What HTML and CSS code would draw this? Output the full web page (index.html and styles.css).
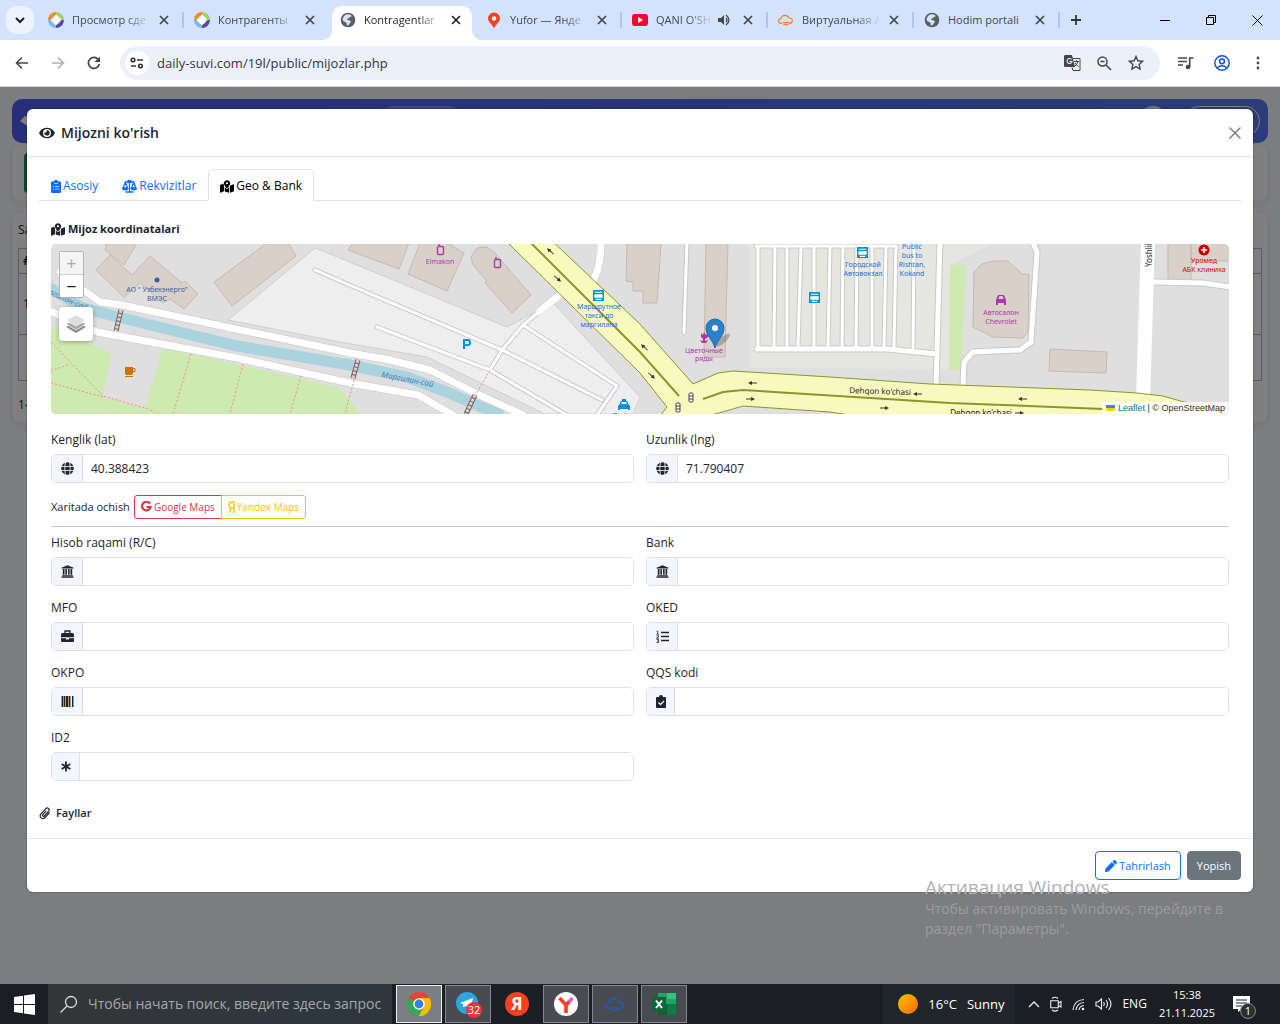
FILE: index.html
```
<!DOCTYPE html>
<html lang="uz">
<head>
    <meta charset="UTF-8">
    <meta name="viewport" content="width=device-width, initial-scale=1.0">
    <title>Kontragentlar</title>
    <link rel="stylesheet" href="styles.css">
</head>
<body>
    <svg class="defs" aria-hidden="true">
        <symbol id="x" viewBox="0 0 10 10"><path d="M1 1l8 8M9 1l-8 8" fill="none" stroke="currentColor" stroke-width="1.7"/></symbol>
        <symbol id="world" viewBox="0 0 16 16"><circle cx="8" cy="8" r="7.3" fill="#5a5d61"/><path d="M8 2.300c2 0 3 .8 4 2-1 .6-2.500.4-2.700 1.500-.2.900-2 .5-2.300 1.500-.2 1 2.500.6 3.500 1.600.9 1-.5 2-1 2.800-.6.900-1.300 2-2.300 1.800-1-.3-.3-1.800-.8-2.600-.8-1-2.500-1-3.700-2.400C2.300 5 5 2.300 8 2.300z" fill="#d3e3fd"/></symbol>
        <symbol id="ring" viewBox="0 0 16 16"><g fill="none" stroke-width="4"><path d="M2 8A6 6 0 0 1 8 2" stroke="#f08a28"/><path d="M8 2a6 6 0 0 1 6 6" stroke="#a9cf62"/><path d="M14 8a6 6 0 0 1-6 6" stroke="#5a45a8"/><path d="M8 14a6 6 0 0 1-6-6" stroke="#79b9e8"/></g><path d="M8 2.500L13.500 8 8 13.500 2.500 8z" fill="#fff"/></symbol>
        <symbol id="cloud" viewBox="0 0 24 18"><path d="M6 14H4.500a3.500 3.500 0 0 1 0-7c.5-3 3-5 6-5s5 1.500 6 4c3 0 5 1.500 5 4 0 2.300-1.500 4-4 4H17M7 13h10M8 16h8" fill="none" stroke="currentColor" stroke-width="1.700"/></symbol>
        <symbol id="mapicon" viewBox="0 0 576 512"><path d="M0 190l144-58c0 30 7 52 20 78v240L20 510c-10 4-20-4-20-14zM288 0c72 0 128 56 128 126 0 60-60 140-108 196-11 13-29 13-40 0-48-56-108-136-108-196C160 56 216 0 288 0zm0 168a44 44 0 1 0 0-88 44 44 0 1 0 0 88zM196 270c15 26 33 48 51 70 22 26 60 26 82 0 18-22 36-44 51-70v176l-12 64-172-52zM412 220l144-60c10-4 20 4 20 14v276l-164 60z" fill="currentColor"/></symbol>
        <symbol id="globe" viewBox="0 0 512 512"><circle cx="256" cy="256" r="248" fill="currentColor"/><path d="M0 175h512M0 337h512M178 0c-35 150-35 362 0 512M334 0c35 150 35 362 0 512" fill="none" stroke="#f3f6ff" stroke-width="34"/></symbol>
        <symbol id="bank" viewBox="0 0 512 512"><path d="M256 10L18 105v35h476v-35zM70 160h68v225H70zm102 0h62v225h-62zm106 0h62v225h-62zm96 0h68v225h-68zM48 400h416v40H48zM16 450h480v50H16z" fill="currentColor"/></symbol>
        <symbol id="bus" viewBox="0 0 12 12"><path d="M0 0h12v12H0z" fill="#0092da"/><path d="M2 2h8v1H2zM1.500 4.500h9v4h-9zM3 9.500h6v1.500H3z" fill="#fff"/></symbol>
        <symbol id="arrow" viewBox="0 0 10 6"><path d="M3 3h6" stroke="#333" stroke-width="1"/><path d="M0 3l4-2v4z" fill="#333"/></symbol>
    </svg>

    <div class="tabstrip">
        <button class="tab-search" aria-label="Search tabs"><svg width="10" height="7" viewBox="0 0 10 7"><path d="M1 1l4 4 4-4" fill="none" stroke="#1f1f1f" stroke-width="2"/></svg></button>
        <div class="tab"><svg class="fav"><use href="#ring"/></svg><span>Просмотр сде</span><button aria-label="Close"><svg><use href="#x"/></svg></button></div>
        <div class="tab no-line"><svg class="fav"><use href="#ring"/></svg><span>Контрагенты</span><button aria-label="Close"><svg><use href="#x"/></svg></button></div>
        <div class="tab current"><svg class="fav"><use href="#world"/></svg><span>Kontragentlar</span><button aria-label="Close"><svg><use href="#x"/></svg></button></div>
        <div class="tab"><svg class="fav" viewBox="0 0 16 16"><path d="M8 .5a6 6 0 0 1 6 6c0 4-4 5-5.300 9H7.300C6 11.500 2 10.500 2 6.500a6 6 0 0 1 6-6z" fill="#fc3f1d"/><circle cx="8" cy="6.500" r="2.200" fill="#fff"/></svg><span>Yufor — Янде</span><button aria-label="Close"><svg><use href="#x"/></svg></button></div>
        <div class="tab"><svg class="fav" viewBox="0 0 16 16"><rect y="2" width="16" height="12" rx="3" fill="#f03"/><path d="M6 5l5 3-5 3z" fill="#fff"/></svg><span>QANI O'SH</span><svg class="sound" viewBox="0 0 12 12"><path d="M0 4h3l3-3v10L3 8H0z" fill="#474747"/><path d="M8 4q2 2 0 4M8 1q6 5 0 10" fill="none" stroke="#474747" stroke-width="1.300"/></svg><button aria-label="Close"><svg><use href="#x"/></svg></button></div>
        <div class="tab"><svg class="fav orange"><use href="#cloud"/></svg><span>Виртуальная А</span><button aria-label="Close"><svg><use href="#x"/></svg></button></div>
        <div class="tab fits"><svg class="fav"><use href="#world"/></svg><span>Hodim portali</span><button aria-label="Close"><svg><use href="#x"/></svg></button></div>
        <button class="new-tab" aria-label="New tab"><svg width="12" height="12" viewBox="0 0 12 12"><path d="M6 1v10M1 6h10" stroke="#333" stroke-width="1.800"/></svg></button>
        <div class="window-buttons">
            <button aria-label="Minimize"><svg width="11" height="11" viewBox="0 0 11 11"><path d="M0 5.500h10" stroke="#000"/></svg></button>
            <button aria-label="Restore"><svg width="11" height="11" viewBox="0 0 11 11"><path d="M.5 2.500h7v7h-7zM2.500 2.500v-2h7v7h-2" fill="none" stroke="#000"/></svg></button>
            <button aria-label="Close window"><svg width="11" height="11" viewBox="0 0 11 11"><path d="M.5.5l10 10M10.500.5l-10 10" stroke="#000"/></svg></button>
        </div>
    </div>

    <div class="toolbar">
        <button aria-label="Back"><svg width="14" height="14" viewBox="0 0 14 14"><path d="M13 7H2M7 1.500L1.500 7 7 12.500" fill="none" stroke="#474747" stroke-width="1.600"/></svg></button>
        <button aria-label="Forward"><svg width="14" height="14" viewBox="0 0 14 14"><path d="M1 7h11M7 1.500L12.500 7 7 12.500" fill="none" stroke="#b0b0b0" stroke-width="1.600"/></svg></button>
        <button aria-label="Reload"><svg width="14" height="14" viewBox="0 0 14 14"><path d="M12.300 8A5.500 5.500 0 1 1 11 3.200L12.500 5" fill="none" stroke="#474747" stroke-width="1.700"/><path d="M13 .5V6H7.500z" fill="#474747"/></svg></button>
        <div class="address">
            <button class="site-info" aria-label="Site information"><svg width="14" height="12" viewBox="0 0 14 12"><g fill="none" stroke="#333" stroke-width="1.600"><circle cx="3" cy="3" r="1.800"/><path d="M7 3h6M1 9h5"/><circle cx="10.500" cy="9" r="1.800"/></g></svg></button>
            <input type="text" aria-label="Address" value="daily-suvi.com/19l/public/mijozlar.php">
            <button aria-label="Translate"><svg width="17" height="16" viewBox="0 0 17 16"><path d="M1 0h7l3 12H1a1 1 0 0 1-1-1V1z" fill="#474747"/><path d="M7.500 4.500A2.500 2.500 0 1 0 8 6.500H5.500" fill="none" stroke="#ecf0fa" stroke-width="1.100"/><path d="M9 3.500h7v12H9l-1-3M10 6.500h5M12.500 5v1.500M14 6.500q-1 3-3.500 5M11 8q1 2 3.500 3.500" fill="none" stroke="#474747"/></svg></button>
            <button aria-label="Zoom"><svg width="15" height="15" viewBox="0 0 15 15"><path d="M9 9l5 5M3.500 5.500h4" stroke="#474747" stroke-width="1.600"/><circle cx="5.500" cy="5.500" r="4.500" fill="none" stroke="#474747" stroke-width="1.500"/></svg></button>
            <button aria-label="Bookmark"><svg width="16" height="16" viewBox="0 0 16 16"><path d="M8 1.500l1.900 4.300 4.700.5-3.500 3.100 1 4.600L8 11.600 3.900 14l1-4.600L1.400 6.300l4.700-.5z" fill="none" stroke="#474747" stroke-width="1.400"/></svg></button>
        </div>
        <button aria-label="Media"><svg width="16" height="14" viewBox="0 0 16 14"><path d="M0 2h9M0 5.500h9M0 9h5" stroke="#474747" stroke-width="1.500"/><path d="M11.700 11V2H15.500" fill="none" stroke="#474747" stroke-width="1.700"/><circle cx="10" cy="11" r="2.300" fill="#474747"/></svg></button>
        <button aria-label="Profile"><svg width="16" height="16" viewBox="0 0 16 16"><g fill="none" stroke="#0b57d0" stroke-width="1.500"><circle cx="8" cy="8" r="7.200"/><circle cx="8" cy="6.300" r="2.400"/><path d="M3 13q5-4.500 10 0"/></g></svg></button>
        <button aria-label="Menu"><svg width="4" height="14" viewBox="0 0 4 14"><g fill="#474747"><circle cx="2" cy="2" r="1.400"/><circle cx="2" cy="7" r="1.400"/><circle cx="2" cy="12" r="1.400"/></g></svg></button>
    </div>

    <main class="viewport">
        <div class="page">
            <div class="navbar"><svg width="14" height="14" viewBox="0 0 14 14"><path d="M0 7l5-5h5l4 5-5 6z" fill="#fff"/></svg><i class="pill"></i><i class="avatar"></i><i class="logout"></i></div>
            <div class="card toolbar-card"><i class="add"></i></div>
            <div class="card list-card">
                <div>Sahifada</div>
                <table>
                    <tr><th>#</th><th></th></tr>
                    <tr><td>1</td><td></td></tr>
                    <tr><td></td><td></td></tr>
                </table>
                <div>1-1 / 1</div>
            </div>
        </div>
        <div class="backdrop"></div>

        <section class="modal" role="dialog" aria-labelledby="modalTitle">
            <header class="modal-header">
                <svg width="16" height="14" viewBox="0 0 576 512"><path fill="currentColor" d="M572.520 241.400C518.290 135.590 410.930 64 288 64S57.680 135.640 3.480 241.410a32.350 32.350 0 0 0 0 29.190C57.710 376.410 165.070 448 288 448s230.320-71.640 284.520-177.410a32.350 32.350 0 0 0 0-29.190zM288 400a144 144 0 1 1 144-144 143.930 143.930 0 0 1-144 144zm0-240a95.310 95.310 0 0 0-25.310 3.790 47.850 47.850 0 0 1-66.900 66.900A95.780 95.780 0 1 0 288 160z"/></svg>
                <h1 id="modalTitle">Mijozni ko'rish</h1>
                <button class="btn-close" aria-label="Close"><svg width="12" height="12" viewBox="0 0 12 12"><path d="M.5.5l11 11M11.500.5l-11 11" stroke="#7f7f7f" stroke-width="1.500"/></svg></button>
            </header>

            <div class="modal-body">
                <nav class="nav-tabs">
                    <a href="#asosiy"><svg width="10" height="13" viewBox="0 0 10 13"><path d="M1 1.500h2a2 2 0 0 1 4 0h2a1 1 0 0 1 1 1V12a1 1 0 0 1-1 1H1a1 1 0 0 1-1-1V2.500a1 1 0 0 1 1-1z" fill="currentColor"/><path d="M3 3.500h4M2 6.500h1M4 6.500h4M2 9h1M4 9h4" stroke="#fff" stroke-width=".7"/></svg>Asosiy</a>
                    <a href="#rekvizit"><svg width="15" height="13" viewBox="0 0 15 13"><path d="M7.500 0v12M2.500 2h10M3.500 12h8M3.300 2.500L1 8h4.600zM11.700 2.500L9.400 8H14z" fill="none" stroke="currentColor" stroke-width="1.300"/><path d="M0 8h6.400a3.200 2.500 0 0 1-6.400 0zM8.600 8H15a3.200 2.500 0 0 1-6.400 0zM5.500 0h4v3h-4z" fill="currentColor"/></svg>Rekvizitlar</a>
                    <a href="#geo" class="active"><svg width="14" height="13"><use href="#mapicon"/></svg>Geo &amp; Bank</a>
                </nav>

                <div class="tab-pane">
                    <h2><svg width="14" height="13"><use href="#mapicon"/></svg>Mijoz koordinatalari</h2>
                    <div class="map">
                        <svg class="tiles" viewBox="51 244 1178 170" preserveAspectRatio="xMidYMid slice">
                            <path class="land" d="M51 244h1178v170H51z"/>
                            <path class="green" d="M51 326l60 27-8 44 42 11 18-60 175 39 12 13 10 14H51z"/>
                            <path class="lot" d="M228 320l87-72 25 10 167 69 46-24 87 94-7 17h-88l-118-57-87-15z"/>
                            <path class="station" d="M750 244v124l199 1 1-104 42-21z"/>
                            <g class="building">
                                <path d="M107 243h30l-13 22-19-15zM96 270l14-15 22 20 18-19 32 27 3-2 13 13-14 15-14-10-7 4-23-20-16 14zM214 282l53-39h21l8 13-64 50zM353 243l-5 7 51 19 10-26zM420 243l-12 31 39 17 17-38-17-10zM471 257l6-9 10-1 8 6 36 42-19 18-27-30 2-2-14-16z"/>
                                <path d="M627 243l-1 38 7 1v9h10v12h14l4-60zM706 243h22l-3 114h-21zM974 272l8-8 11-3h15l14 13h7l-1 58-5 6-30-1-20-10zM1050 349l57 3-1 21-57-2zM1168 243h23v38l-23-2zM1191 243h39v18h-39z"/>
                            </g>
                            <path class="green" d="M950 265h16l-5 105h-12z"/>
                            <path class="water" d="M45 285l38 23 39 10 115 28 113 19 57 12 40 15 55 24"/>
                            <g class="road-edge">
                                <path class="w10" d="M60 272l23 18 17 12 22 3 228 48 40 7 40 10 43 22 50 23M48 310l49 22 140 26 113 25 68 12 35 20M562 293l-22 18M601 240q1 25-10 45M1148 240l-5 160"/>
                                <path class="w6" d="M540 311l-17 14-21 25-12 20M315 270l25 11 162 69 100 50M377 327l113 43 75 44M523 325l94 61-20 29M687 240l-3 93"/>
                            </g>
                            <g class="road">
                                <path class="w8" d="M60 272l23 18 17 12 22 3 228 48 40 7 40 10 43 22 50 23M48 310l49 22 140 26 113 25 68 12 35 20M562 293l-22 18M601 240q1 25-10 45"/>
                                <path class="w4" d="M540 311l-17 14-21 25-12 20M315 270l25 11 162 69 100 50M377 327l113 43 75 44M523 325l94 61-20 29M687 240l-3 93"/>
                            </g>
                            <g class="road-edge"><path class="w6" d="M758 246v103M775 246l-1 102M787 246v102M801 246l-3 102M814 246v102M830 246l-2 102M843 246l-1 102M857 246l-1 102M872 246v102M886 246l-2 102M896 246l-2 102M914 246l-1 104M756 246h140"/><path class="w8" d="M940 240l-4 148M757 349h130l50 5M1033 243l4 9-6 90-11 8-47 2-9 10-1 26M1154 282l49 1 28 4"/></g>
                            <g class="road"><path class="w4" d="M758 246v103M775 246l-1 102M787 246v102M801 246l-3 102M814 246v102M830 246l-2 102M843 246l-1 102M857 246l-1 102M872 246v102M886 246l-2 102M896 246l-2 102M914 246l-1 104M756 246h140"/><path class="w6" d="M940 240l-4 148M757 349h130l50 5M1033 243l4 9-6 90-11 8-47 2-9 10-1 26M1154 282l49 1 28 4"/><path class="w14" d="M1148 240l-5 160"/></g>
                            <path class="highway" d="M505 240l135 133 27 34-8 10h46l38-11 87 6 40 6h370l-77-22-26-3-47-3-160-6-100-7-97-6-15 2-25 11-53-60-91-86z"/>
                            <path class="median" d="M528 240l112 112 39 44M703 399l20-7 20-2 207 13 53 2 100 4"/>
                            <g class="footway"><path d="M51 342l52 54 42 12 15 6M51 383l52 14M51 371l19-7M191 354l-18 60M243 364l-13 50M301 376l-11 38M354 380l-9 34M490 370l-15 26"/></g>
                            <g class="bridge"><path d="M121 310l-5 21M358 360l-5 18M475 395l-9 19"/></g><g class="bridge-in"><path d="M121 310l-5 21M358 360l-5 18M475 395l-9 19"/></g>
                            <use href="#arrow" x="748" y="380" width="10" height="6"/><use href="#arrow" x="913" y="391" width="10" height="6"/><use href="#arrow" x="1018" y="396" width="10" height="6"/>
                            <use href="#arrow" width="10" height="6" transform="translate(755 402) rotate(180)"/><use href="#arrow" width="10" height="6" transform="translate(889 411) rotate(180)"/><use href="#arrow" width="10" height="6" transform="translate(1024 416) rotate(180)"/>
                            <use href="#arrow" width="10" height="6" transform="translate(549 246) rotate(42)"/><use href="#arrow" width="10" height="6" transform="translate(643 342) rotate(42)"/><use href="#arrow" width="10" height="6" transform="translate(559 284) rotate(222)"/><use href="#arrow" width="10" height="6" transform="translate(653 381) rotate(222)"/>
                            <g fill="#fff" stroke="#444"><rect x="689" y="393" width="4" height="9" rx="1"/><rect x="676" y="403" width="4" height="9" rx="1"/><path d="M689 396h4M689 399h4M676 406h4M676 409h4"/></g>
                            <circle cx="157" cy="280" r="2.500" fill="#3a5fa8"/>
                            <path d="M125 367h8v6l-1 2h-6l-1-2zM125 376h8v1h-8z" fill="#c77400"/><path d="M133 368.500h2v3h-2" fill="none" stroke="#c77400"/>
                            <path d="M464 349v-9h4q2 0 2 2.500t-2 2.500h-4" fill="none" stroke="#0092da" stroke-width="2"/>
                            <use href="#bus" x="593" y="290" width="11" height="11"/><use href="#bus" x="809" y="292" width="11" height="11"/><use href="#bus" x="857" y="247" width="11" height="11"/>
                            <path d="M619 405l2-4h1v-2h4v2h1l2 4 1 1v4h-2v-1h-8v1h-2v-4zM622 402l-1 2h6l-1-2z" fill="#0092da" fill-rule="evenodd"/>
                            <g fill="none" stroke="#ac39ac" stroke-width="1.400"><rect x="437.500" y="246.500" width="6" height="8" rx="1"/><rect x="494.500" y="259.500" width="6" height="8" rx="1"/><path d="M439 244v2M496 257v2"/></g>
                            <path d="M996 300l2-5h6l2 5v5h-2v-2h-6v2h-2zM998.500 299h5l-1-3h-3z" fill="#ac39ac" fill-rule="evenodd"/>
                            <path d="M701 333l2 2 1-3 2 3 2-2v4l-3 2v2l3-1-2 3h-4l-2-3 3 1v-2l-2-2z" fill="#ac39ac"/>
                            <circle cx="1204" cy="250" r="5.500" fill="#c80000"/><path d="M1204 247v6M1201 250h6" stroke="#fff" stroke-width="1.600"/>
                            <g class="map-text">
                                <text x="157" y="292" fill="#3a5fa8">АО " Узбекэнерго"</text><text x="157" y="301" fill="#3a5fa8">ВМЭС</text>
                                <text x="440" y="264" fill="#ac39ac">Elmakon</text>
                                <g fill="#1a6fe0"><text x="599" y="309">Маршрутное</text><text x="599" y="318">такси до</text><text x="599" y="327">маргилана</text><text x="863" y="267">Городской</text><text x="863" y="276">Автовокзал</text><text x="912" y="249">Public</text><text x="912" y="258">bus to</text><text x="912" y="267">Rishtan,</text><text x="912" y="276">Kokand</text><text x="624" y="418">Toyloq</text></g>
                                <g fill="#ac39ac"><text x="704" y="353">Цветочные</text><text x="704" y="361">ряды</text><text x="1001" y="315">Автосалон</text><text x="1001" y="324">Chevrolet</text></g>
                                <g fill="#da0012"><text x="1204" y="263">Уромед</text><text x="1204" y="272">АБК клиника</text></g>
                                <g class="street"><text transform="translate(880 394) rotate(2)">Dehqon ko'chasi</text><text x="981" y="416">Dehqon ko'chasi</text><text transform="translate(1152 254) rotate(-90)">Yoshlik</text></g>
                                <g class="river"><text transform="translate(407 382) rotate(11)">Маргилан-сай</text><text transform="translate(62 300) rotate(24)">Маргилан-сай</text></g>
                            </g>
                            <ellipse cx="723" cy="340" rx="9" ry="3" fill="#000" opacity=".22" transform="rotate(-42 723 340)"/>
                            <path d="M715 348c-2-8-9-12-9-20a9 9 0 0 1 18 0c0 8-7 12-9 20z" fill="#2a81cb" stroke="#1f6aa9"/><circle cx="715" cy="328" r="3" fill="#fff"/>
                        </svg>
                        <div class="map-controls">
                            <div class="zoom"><button disabled>+</button><button>−</button></div>
                            <button class="layers" aria-label="Layers"><svg width="22" height="20" viewBox="0 0 22 20"><path d="M1 13l10 6 10-6-10-5z" fill="#8b8b8b"/><path d="M1 10l10 6 10-6-10-5z" fill="#aaa" stroke="#fff" stroke-width=".7"/><path d="M1 6l10 6 10-6-10-5z" fill="#ddd" stroke="#fff" stroke-width=".7"/></svg></button>
                        </div>
                        <div class="attribution"><svg width="9" height="6" viewBox="0 0 9 6"><path d="M0 0h9v3H0z" fill="#4c7be1"/><path d="M0 3h9v3H0z" fill="#ffd500"/></svg> <a href="#leaflet">Leaflet</a> | © OpenStreetMap</div>
                    </div>

                    <div class="fields">
                        <div class="field"><label for="lat">Kenglik (lat)</label><div class="group"><span><svg width="13" height="13"><use href="#globe"/></svg></span><input id="lat" type="text" value="40.388423"></div></div>
                        <div class="field"><label for="lng">Uzunlik (lng)</label><div class="group"><span><svg width="13" height="13"><use href="#globe"/></svg></span><input id="lng" type="text" value="71.790407"></div></div>
                    </div>

                    <div class="open-map">
                        <span>Xaritada ochish</span>
                        <div class="btn-group">
                            <a href="#google" class="google"><svg width="11" height="12" viewBox="0 0 11 12"><path d="M9 2.700A4.300 4.300 0 1 0 9.600 6H5.500" fill="none" stroke="currentColor" stroke-width="2.200"/></svg>Google Maps</a>
                            <a href="#yandex" class="yandex"><svg width="7" height="12" viewBox="0 0 7 12"><path d="M6 12V1H4Q1 1 1 4t3 3h2M3.500 7L1 12" fill="none" stroke="currentColor" stroke-width="1.500"/></svg>Yandex Maps</a>
                        </div>
                    </div>
                    <hr>

                    <div class="fields bank-fields">
                        <div class="field"><label for="rc">Hisob raqami (R/C)</label><div class="group"><span><svg width="13" height="13"><use href="#bank"/></svg></span><input id="rc" type="text"></div></div>
                        <div class="field"><label for="bankName">Bank</label><div class="group"><span><svg width="13" height="13"><use href="#bank"/></svg></span><input id="bankName" type="text"></div></div>
                        <div class="field"><label for="mfo">MFO</label><div class="group"><span><svg width="13" height="13" viewBox="0 0 13 13"><path d="M4 3V1h5v2" fill="none" stroke="currentColor" stroke-width="1.300"/><path d="M1.500 3h10A1.500 1.500 0 0 1 13 4.500v2.700H0V4.500A1.500 1.500 0 0 1 1.500 3zM0 8.200h5v1.300h3V8.200h5v2.600a1.200 1.200 0 0 1-1.200 1.200H1.200A1.200 1.200 0 0 1 0 10.800z" fill="currentColor"/></svg></span><input id="mfo" type="text"></div></div>
                        <div class="field"><label for="oked">OKED</label><div class="group"><span><svg width="13" height="13" viewBox="0 0 13 13"><path d="M5 2.500h8M5 6.500h8M5 10.500h8" stroke="currentColor" stroke-width="1.400"/><path d="M.5 1.200h1.200v3M.5 4.200h2.400M.5 5.800h2v1.100l-2 1.200h2.500M.5 9.500h2v3h-2M1 11h1.500" fill="none" stroke="currentColor" stroke-width=".8"/></svg></span><input id="oked" type="text"></div></div>
                        <div class="field"><label for="okpo">OKPO</label><div class="group"><span><svg width="13" height="13" viewBox="0 0 13 13"><path d="M0 1h2v11H0zM3 1h1v11H3zM5 1h2v11H5zM8 1h1v11H8zM11 1h2v11h-2z" fill="currentColor"/><path d="M0 1h1v11H0zM4 1h1v11H4zM7 1h1v11H7z" fill="#e58b28"/><path d="M2 1h1v11H2zM9 1h1v11H9zM12 1h1v11h-1z" fill="#68a8b5"/></svg></span><input id="okpo" type="text"></div></div>
                        <div class="field"><label for="qqs">QQS kodi</label><div class="group"><span><svg width="10" height="13" viewBox="0 0 10 13"><path d="M1 2h2a2 2 0 0 1 4 0h2a1 1 0 0 1 1 1v9a1 1 0 0 1-1 1H1a1 1 0 0 1-1-1V3a1 1 0 0 1 1-1z" fill="currentColor"/><path d="M2.500 7.500l2 2 3.500-3.500" fill="none" stroke="#f3f6ff" stroke-width="1.300"/></svg></span><input id="qqs" type="text"></div></div>
                        <div class="field"><label for="id2">ID2</label><div class="group"><span><svg width="10" height="13" viewBox="0 0 10 13"><path d="M5 1.500v10M.7 4l8.600 5M9.300 4L.7 9" stroke="currentColor" stroke-width="1.800"/></svg></span><input id="id2" type="text"></div></div>
                    </div>
                </div>

                <h2 class="files"><svg width="12" height="13" viewBox="0 0 12 13"><path d="M10.500 5.500l-4.700 5.300a2.700 2.700 0 0 1-4-3.600l5-5.500a1.900 1.900 0 0 1 2.900 2.500L5.400 9a1 1 0 0 1-1.600-1.300l3.400-3.900" fill="none" stroke="currentColor" stroke-width="1.200"/></svg>Fayllar</h2>
            </div>

            <footer class="modal-footer">
                <button class="btn btn-outline"><svg width="12" height="12" viewBox="0 0 512 512"><path fill="currentColor" d="M497.900 142.100l-46.100 46.100c-4.700 4.700-12.300 4.700-17 0l-111-111c-4.700-4.700-4.700-12.300 0-17l46.100-46.100c18.700-18.700 49.100-18.700 67.900 0l60.100 60.100c18.800 18.700 18.800 49.100 0 67.900zM284.200 99.800L21.600 362.400.4 483.900c-2.900 16.400 11.400 30.600 27.800 27.800l121.500-21.300 262.600-262.600c4.700-4.700 4.700-12.300 0-17l-111-111c-4.800-4.700-12.400-4.700-17.100 0z"/></svg>Tahrirlash</button>
                <button class="btn btn-secondary">Yopish</button>
            </footer>
        </section>

        <div class="activation"><strong>Активация Windows</strong><p>Чтобы активировать Windows, перейдите в раздел "Параметры".</p></div>
    </main>

    <div class="taskbar">
        <button class="start" aria-label="Start"><svg width="21" height="21" viewBox="0 0 21 21"><path d="M0 3l9-1.200V10H0zM10 1.600L21 0v10H10zM0 11h9v8.200L0 18zM10 11h11v10l-11-1.600z" fill="#fff"/></svg></button>
        <label class="search"><svg width="18" height="18" viewBox="0 0 18 18"><circle cx="11" cy="7" r="5.500" fill="none" stroke="#ddd" stroke-width="1.300"/><path d="M7 11l-6.500 6.500" stroke="#ddd" stroke-width="1.300"/></svg><input type="text" placeholder="Чтобы начать поиск, введите здесь запрос" aria-label="Search"></label>
        <div class="apps">
            <button class="open front" aria-label="Chrome"><svg width="24" height="24" viewBox="0 0 24 24"><path d="M12 12L1.600 6a12 12 0 0 1 20.800 0z" fill="#ea4335"/><path d="M12 12V6h10.400A12 12 0 0 1 12 24l-2-3z" fill="#fbbc05"/><path d="M12 12l5 3-5 9A12 12 0 0 1 1.600 6z" fill="#34a853"/><path d="M12 24l5.200-9V9h6.400A12 12 0 0 1 12 24z" fill="#fbbc05"/><circle cx="12" cy="12" r="5.800" fill="#fff"/><circle cx="12" cy="12" r="4.400" fill="#3b7ded"/></svg></button>
            <button class="open" aria-label="Telegram"><svg width="25" height="25" viewBox="0 0 25 25"><circle cx="11" cy="11" r="11" fill="#2ca5e0"/><path d="M4 11l13-5-3 12-4-4-3 1v-3z" fill="#fff"/></svg><b>32</b></button>
            <button aria-label="Yandex"><i class="ya">Я</i></button>
            <button class="open" aria-label="Yandex Browser"><svg width="24" height="24" viewBox="0 0 24 24"><circle cx="12" cy="12" r="12" fill="#fff"/><path d="M5.500 6l6.500 7v8" fill="none" stroke="#fc3f1d" stroke-width="3.600"/><path d="M12 13l6.500-7" stroke="#e35bd0" stroke-width="3.600"/><path d="M12 13l3-3" stroke="#fc3f1d" stroke-width="3.600"/></svg></button>
            <button class="open blue" aria-label="Cloud phone"><svg width="20" height="15"><use href="#cloud"/></svg></button>
            <button class="open" aria-label="Excel"><svg width="24" height="23" viewBox="0 0 24 23"><path d="M6 0h9v22H6z" fill="#21a366"/><path d="M15 0h9v6h-9z" fill="#33c481"/><path d="M15 6h9v5h-9z" fill="#21a366"/><path d="M6 11h9v11H6z" fill="#185c37"/><path d="M15 11h9v11h-9z" fill="#107c41"/><path d="M0 4h14v14H0z" fill="#0e6836"/><path d="M4 7.500l6 7.500M10 7.500L4 15" stroke="#fff" stroke-width="2"/></svg></button>
        </div>
        <div class="weather"><i class="sun"></i><span>16°C</span><span>Sunny</span></div>
        <div class="tray">
            <svg width="12" height="8" viewBox="0 0 12 8"><path d="M1 7l5-5 5 5" fill="none" stroke="#eee" stroke-width="1.300"/></svg>
            <svg width="12" height="16" viewBox="0 0 12 16"><path d="M.7 4.700h7.600v7H.7zM8.500 7L11 5.500v5.500L8.500 9.500M2 2.500q3-2.500 6 0M2 14q3 2.300 6 0" fill="none" stroke="#eee" stroke-width="1.100"/></svg>
            <svg width="13" height="13" viewBox="0 0 13 13"><path d="M1 12Q2 2 12 1.500M4 12q1-7 8-7.500M7 12q.5-4 5-4.500" fill="none" stroke="#ddd" stroke-width="1.200"/><circle cx="11" cy="11" r="1.300" fill="#eee"/></svg>
            <svg width="17" height="14" viewBox="0 0 17 14"><path d="M1 5h2l3.500-3v10L3 9H1zM8.500 5q1.500 2 0 4M11 3q3 4 0 8M13.500 1q5 6 0 12" fill="none" stroke="#eee" stroke-width="1.100"/></svg>
            <span>ENG</span>
        </div>
        <div class="clock"><span>15:38</span><span>21.11.2025</span></div>
        <button class="notes" aria-label="Notifications"><svg width="17" height="17" viewBox="0 0 17 17"><path d="M0 0h17v13h-8l-4 3v-3H0z" fill="#fff"/><path d="M3 4h11M3 7h11M3 10h6" stroke="#1d2024"/></svg><b>1</b></button>
    </div>
</body>
</html>
```
FILE: styles.css
```
* {
    box-sizing: border-box;
}
body {
    margin: 0;
    min-height: 100vh;
    display: flex;
    flex-direction: column;
    font-family: "Open Sans", "Noto Sans", sans-serif;
    font-size: 12px;
    line-height: 18px;
    color: #212529;
    overflow-x: hidden;
}
button, input {
    font: inherit;
    color: inherit;
}
button {
    border: 0;
    padding: 0;
    background: none;
    display: flex;
    align-items: center;
    justify-content: center;
    flex-shrink: 0;
}
svg {
    flex-shrink: 0;
}
a {
    text-decoration: none;
}
.defs {
    display: none;
}

/* browser tabs */
.tabstrip {
    display: flex;
    align-items: center;
    height: 40px;
    padding-left: 6px;
    background: #d3e3fd;
}
.tab-search {
    width: 28px;
    height: 28px;
    border-radius: 10px;
    background: #ecf3fe;
    margin-right: 6px;
}
.tab {
    flex: 0 1 146px;
    min-width: 0;
    height: 34px;
    display: flex;
    align-items: center;
    padding: 0 14px 0 8px;
    font-size: 11px;
    color: #474747;
    background: linear-gradient(#a8c7fa, #a8c7fa) calc(100% - 2px) 50% / 2px 16px no-repeat;
}
.tab.no-line {
    background: none;
}
.tab.current {
    position: relative;
    flex-basis: 140px;
    align-self: flex-end;
    margin-right: 6px;
    padding: 0 8px 6px;
    border-radius: 10px 10px 0 0;
    color: #1f1f1f;
    background: #fff;
}
.tab.current::before, .tab.current::after {
    content: "";
    position: absolute;
    bottom: 0;
    width: 10px;
    height: 10px;
}
.tab.current::before {
    right: 100%;
    background: radial-gradient(circle at 0 0, transparent 10px, #fff 10px);
}
.tab.current::after {
    left: 100%;
    background: radial-gradient(circle at 100% 0, transparent 10px, #fff 10px);
}
.tab span {
    flex: 1;
    min-width: 0;
    overflow: hidden;
    white-space: nowrap;
    margin: 0 6px 0 8px;
    mask-image: linear-gradient(90deg, #000 calc(100% - 24px), transparent);
}
.tab.fits span {
    mask-image: none;
}
.tab .fav {
    width: 16px;
    height: 16px;
}
.tab .orange {
    color: #f08040;
}
.tab .sound {
    width: 12px;
    height: 12px;
    margin-right: 10px;
}
.tab button, .tab button svg {
    width: 10px;
    height: 10px;
}
.tab button {
    width: 16px;
}
.new-tab {
    width: 28px;
    height: 28px;
}
.window-buttons {
    display: flex;
    margin-left: auto;
}
.window-buttons button {
    width: 46px;
    height: 40px;
}

/* address bar */
.toolbar {
    display: flex;
    align-items: center;
    height: 47px;
    padding: 0 4px;
    border-bottom: 1px solid #d9d9d9;
    background: #fff;
}
.toolbar > button {
    width: 36px;
    height: 34px;
}
.address {
    flex: 1;
    min-width: 0;
    display: flex;
    align-items: center;
    height: 34px;
    margin: 0 8px;
    padding: 0 8px 0 5px;
    border-radius: 17px;
    background: #ecf0fa;
}
.address input {
    flex: 1;
    min-width: 0;
    border: 0;
    background: none;
    padding: 0 8px;
    font-size: 13px;
    color: #33363b;
}
.address button {
    width: 32px;
    height: 24px;
}
.address .site-info {
    width: 24px;
    border-radius: 12px;
    background: #fff;
}

/* page under the dialog: all layers share one grid cell */
.viewport {
    flex: 1;
    display: grid;
    grid-template-columns: minmax(0, 1fr);
    position: relative;
}
.page, .backdrop, .modal {
    grid-area: 1 / 1;
}
.page {
    padding: 12px;
    background: #f8faff;
}
.backdrop {
    background: rgba(0, 0, 0, 0.5);
}
.navbar {
    display: flex;
    align-items: center;
    gap: 16px;
    height: 44px;
    padding: 0 8px;
    border-radius: 10px;
    background: linear-gradient(90deg, #4d5ff0, #5877f2);
}
.navbar i {
    height: 30px;
    border-radius: 15px;
    background: #e8e8ff;
}
.navbar .pill {
    width: 86px;
    margin-left: 328px;
    background: #7f8ff5;
}
.navbar .avatar {
    width: 30px;
    margin-left: auto;
}
.navbar .logout {
    width: 76px;
    background: none;
    border: 1px solid #fff;
}
.card {
    border-radius: 10px;
    background: #fff;
    box-shadow: 0 2px 6px rgba(30, 60, 120, 0.1);
}
.toolbar-card {
    margin-top: 2px;
    padding: 8px 12px;
}
.toolbar-card .add {
    display: block;
    width: 80px;
    height: 40px;
    border-radius: 4px;
    background: #198754;
}
.list-card {
    margin-top: 12px;
    padding: 8px 6px;
}
.list-card table {
    width: 100%;
    margin: 9px 0 15px;
    border-collapse: collapse;
    text-align: left;
}
.list-card tr {
    height: 61px;
    border: 1px solid #aabbe0;
}
.list-card tr:first-child {
    height: 25px;
}
.list-card tr:last-child {
    height: 46px;
}
.list-card th, .list-card td {
    padding: 0 4px;
}

/* dialog */
.modal {
    align-self: start;
    margin: 22px 27px 0;
    border-radius: 6px;
    background: #fff;
    box-shadow: 0 0 2px rgba(0, 0, 0, 0.5);
}
.modal-header {
    display: flex;
    align-items: center;
    gap: 6px;
    height: 48px;
    padding: 0 12px;
    border-bottom: 1px solid #dee2e6;
}
.modal-header h1 {
    margin: 0;
    font-size: 14px;
    font-weight: 600;
}
.btn-close {
    margin-left: auto;
}
.modal-body {
    padding: 12px;
}
.nav-tabs {
    display: flex;
    height: 32px;
    border-bottom: 1px solid #dee2e6;
}
.nav-tabs a {
    display: flex;
    align-items: center;
    gap: 2px;
    height: 32px;
    padding: 2px 11px 0;
    border: 1px solid transparent;
    border-radius: 5px 5px 0 0;
    color: #0d6efd;
}
.nav-tabs a.active {
    color: #000;
    background: #fff;
    border-color: #dee2e6 #dee2e6 #fff;
}
.tab-pane {
    padding: 19px 12px 0;
}
h2 {
    display: flex;
    align-items: center;
    gap: 3px;
    margin: 0 0 6px;
    font-size: 11px;
    line-height: 18px;
    font-weight: 700;
}
.map {
    position: relative;
    height: 170px;
    border-radius: 5px;
    overflow: hidden;
}
.tiles {
    display: block;
    width: 100%;
    height: 100%;
}
.land { fill: #dfdfdf; }
.green { fill: #cdebb0; }
.lot { fill: #eee; stroke: #d8cccc; }
.station { fill: #e6e6e0; }
.building { fill: #d9d0c9; stroke: #c9b8ac; }
.water { fill: none; stroke: #aad3df; stroke-width: 11; }
.road, .road-edge { fill: none; stroke: #fff; stroke-linejoin: round; stroke-linecap: round; }
.road-edge { stroke: #c9c9c9; }
.w4 { stroke-width: 3; }
.w6 { stroke-width: 5; }
.w8 { stroke-width: 7; }
.w10 { stroke-width: 8; }
.w14 { stroke-width: 14; }
.highway { fill: #f7fabf; stroke: #8c952b; }
.median { fill: none; stroke: #8c952b; stroke-width: 2; }
.footway { fill: none; stroke: #f98a80; stroke-width: 1; stroke-dasharray: 2 2; }
.bridge { stroke: #666; stroke-width: 5; }
.bridge-in { stroke: #f4c8c4; stroke-width: 3; stroke-dasharray: 3 1; }
.map-text {
    font-family: "Noto Sans", sans-serif;
    font-size: 7px;
    text-anchor: middle;
}
.map-text .street {
    font-size: 8px;
    fill: #222;
}
.map-text .river {
    font-size: 8px;
    font-style: italic;
    fill: #4d80b3;
}
.map-controls {
    position: absolute;
    top: 7px;
    left: 8px;
    display: grid;
    gap: 9px;
}
.zoom {
    width: 25px;
    border: 1px solid #b5b5b5;
    border-radius: 2px;
    background: #fff;
}
.zoom button {
    width: 100%;
    height: 22px;
    font-size: 18px;
}
.zoom button:disabled {
    height: 23px;
    color: #aaa;
    background: #f4f4f4;
    border-bottom: 1px solid #ccc;
}
.layers {
    width: 34px;
    height: 34px;
    border-radius: 4px;
    background: #fff;
    box-shadow: 0 1px 5px rgba(0, 0, 0, 0.3);
}
.attribution {
    position: absolute;
    right: 0;
    bottom: 0;
    padding: 0 4px;
    font: 9px/12px "Liberation Sans", Arial, sans-serif;
    color: #333;
    background: rgba(255, 255, 255, 0.8);
}
.attribution a {
    color: #0078a8;
}
.fields {
    display: grid;
    grid-template-columns: repeat(auto-fit, minmax(400px, 1fr));
    gap: 13px 12px;
    margin-top: 17px;
}
.field label {
    display: block;
    margin-bottom: 5px;
}
.group {
    display: flex;
    height: 29px;
    border: 1px solid #dee2e6;
    border-radius: 5px;
    overflow: hidden;
}
.group span {
    display: flex;
    align-items: center;
    padding: 0 8px 0 9px;
    border-right: 1px solid #dee2e6;
    background: #f3f6ff;
}
.group input {
    flex: 1;
    min-width: 0;
    border: 0;
    padding: 0 8px;
}
.open-map {
    display: flex;
    align-items: center;
    gap: 4px;
    margin-top: 12px;
}
.open-map > span {
    font-size: 11px;
}
.btn-group {
    display: flex;
}
.btn-group a {
    display: flex;
    align-items: center;
    gap: 2px;
    height: 24px;
    padding: 0 6px;
    border: 1px solid;
    font-size: 10px;
}
.google {
    color: #dc3545;
    border-radius: 3px 0 0 3px;
}
.yandex {
    color: #ffc107;
    border-radius: 0 3px 3px 0;
    margin-left: -1px;
}
hr {
    margin: 7px 0 0;
    border: 0;
    border-top: 1px solid #c8c9ca;
}
.bank-fields {
    margin-top: 7px;
}
.files {
    gap: 5px;
    margin: 23px 0 4px;
    font-weight: 600;
}
.modal-footer {
    display: flex;
    justify-content: flex-end;
    gap: 6px;
    padding: 12px;
    border-top: 1px solid #dee2e6;
}
.btn {
    height: 29px;
    padding: 0 9px;
    gap: 2px;
    border: 1px solid #0d6efd;
    border-radius: 4px;
    font-size: 11px;
}
.btn-outline {
    color: #0d6efd;
    background: #fff;
}
.btn-secondary {
    color: #fff;
    background: #6c757d;
    border-color: #6c757d;
}
.activation {
    position: absolute;
    right: 35px;
    bottom: 45px;
    width: 320px;
    font-size: 14px;
    line-height: 20px;
    color: #9b9c9f;
}
.activation strong {
    font-size: 19px;
    line-height: 24px;
    font-weight: 400;
    color: #b2b2b4;
}
.activation p {
    margin: 0;
}

/* taskbar */
.taskbar {
    display: flex;
    align-items: center;
    height: 40px;
    color: #fff;
    background: #1b1e22;
}
.start {
    width: 48px;
    height: 40px;
}
.search {
    display: flex;
    align-items: center;
    gap: 8px;
    width: 344px;
    height: 40px;
    padding: 0 6px 0 12px;
    background: linear-gradient(90deg, #343638, #2d3740);
}
.search input {
    flex: 1;
    min-width: 0;
    border: 0;
    background: none;
    font-size: 14px;
}
.search input::placeholder {
    color: #a5a8ab;
}
.apps {
    display: flex;
    gap: 3px;
    margin-left: 4px;
}
.apps button {
    width: 46px;
    height: 38px;
    position: relative;
}
.apps .open {
    background: #484b4f;
    border: 1px solid #85878a;
}
.apps .front {
    background: #7b7e82;
    border-color: #eee;
}
.apps .blue {
    color: #1b5fc4;
}
.apps b {
    position: absolute;
    right: 8px;
    bottom: 4px;
    width: 16px;
    height: 16px;
    border-radius: 8px;
    background: #e8343a;
    font-size: 11px;
    line-height: 16px;
    font-weight: 400;
}
.ya {
    width: 24px;
    height: 24px;
    border-radius: 12px;
    background: #fc3f1d;
    font-size: 17px;
    line-height: 23px;
    font-style: normal;
    font-weight: 700;
}
.weather {
    display: flex;
    align-items: center;
    gap: 10px;
    height: 40px;
    margin-left: auto;
    padding: 0 11px 0 15px;
    font-size: 13px;
    background: #20262c;
}
.sun {
    width: 20px;
    height: 20px;
    border-radius: 10px;
    background: linear-gradient(135deg, #ffc400, #f06a00);
}
.tray {
    display: flex;
    align-items: center;
    gap: 10px;
    margin: 0 12px 0 13px;
}
.clock {
    display: flex;
    flex-direction: column;
    align-items: center;
    font-size: 11px;
}
.notes {
    width: 17px;
    height: 30px;
    margin: 0 30px 0 18px;
    position: relative;
}
.notes b {
    position: absolute;
    left: 7px;
    top: 14px;
    width: 16px;
    height: 16px;
    border: 1px solid #888;
    border-radius: 8px;
    background: #2b2e32;
    font-size: 11px;
    line-height: 14px;
    font-weight: 400;
}
```
